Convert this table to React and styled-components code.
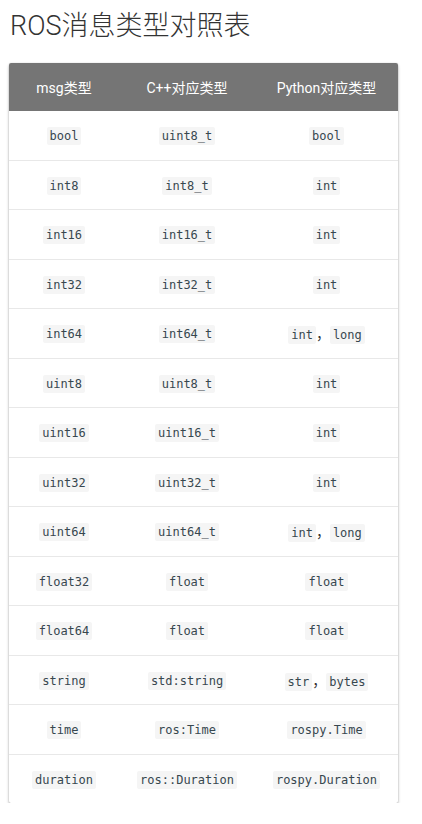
import React from 'react';
import styled, { createGlobalStyle } from 'styled-components';

const GlobalStyle = createGlobalStyle`
  body {
    margin: 0;
    background: #fff;
    font-family: Roboto, "Noto Sans CJK SC", sans-serif;
  }
`;

const Page = styled.div`
  padding: 7px 24px 0 9px;
`;

const Title = styled.h1`
  margin: 0 0 0 1px;
  font-size: 27px;
  font-weight: 300;
  line-height: 38px;
  color: #333;
`;

const Table = styled.table`
  margin-top: 18px;
  width: 389px;
  table-layout: fixed;
  border-collapse: collapse;
  border-radius: 2px;
  overflow: hidden;
  box-shadow: 0 2px 3px rgba(0, 0, 0, 0.3), 0 0 2px rgba(0, 0, 0, 0.12);
`;

const Col = styled.col`
  width: ${(p) => p.$w}px;
`;

const HeadCell = styled.th`
  height: 48px;
  padding: 0;
  background: #757575;
  color: #fff;
  font-size: 14px;
  font-weight: 400;
  text-align: center;
`;

const Row = styled.tr`
  & + & td { border-top: 1px solid #e8e8e8; }
`;

const Cell = styled.td`
  height: 48.5px;
  padding: 0;
  text-align: center;
  font-size: 14px;
  color: #333;
  white-space: nowrap;
`;

const Code = styled.code`
  font-family: "DejaVu Sans Mono", monospace;
  font-size: 12px;
  color: #37474f;
  background: #f5f5f5;
  padding: 2px 3px;
  border-radius: 2px;
`;

const rows = [
  ['bool', 'uint8_t', ['bool']],
  ['int8', 'int8_t', ['int']],
  ['int16', 'int16_t', ['int']],
  ['int32', 'int32_t', ['int']],
  ['int64', 'int64_t', ['int', 'long']],
  ['uint8', 'uint8_t', ['int']],
  ['uint16', 'uint16_t', ['int']],
  ['uint32', 'uint32_t', ['int']],
  ['uint64', 'uint64_t', ['int', 'long']],
  ['float32', 'float', ['float']],
  ['float64', 'float', ['float']],
  ['string', 'std:string', ['str', 'bytes']],
  ['time', 'ros:Time', ['rospy.Time']],
  ['duration', 'ros::Duration', ['rospy.Duration']],
];

export default function App() {
  return (
    <Page>
      <GlobalStyle />
      <Title>ROS消息类型对照表</Title>
      <Table>
        <colgroup>
          <Col $w={110} />
          <Col $w={136} />
          <Col $w={143} />
        </colgroup>
        <thead>
          <tr>
            <HeadCell>msg类型</HeadCell>
            <HeadCell>C++对应类型</HeadCell>
            <HeadCell>Python对应类型</HeadCell>
          </tr>
        </thead>
        <tbody>
          {rows.map(([msg, cpp, py]) => (
            <Row key={msg}>
              <Cell><Code>{msg}</Code></Cell>
              <Cell><Code>{cpp}</Code></Cell>
              <Cell>
                {py.map((p, i) => (
                  <React.Fragment key={p}>
                    {i > 0 && '，'}
                    <Code>{p}</Code>
                  </React.Fragment>
                ))}
              </Cell>
            </Row>
          ))}
        </tbody>
      </Table>
    </Page>
  );
}
